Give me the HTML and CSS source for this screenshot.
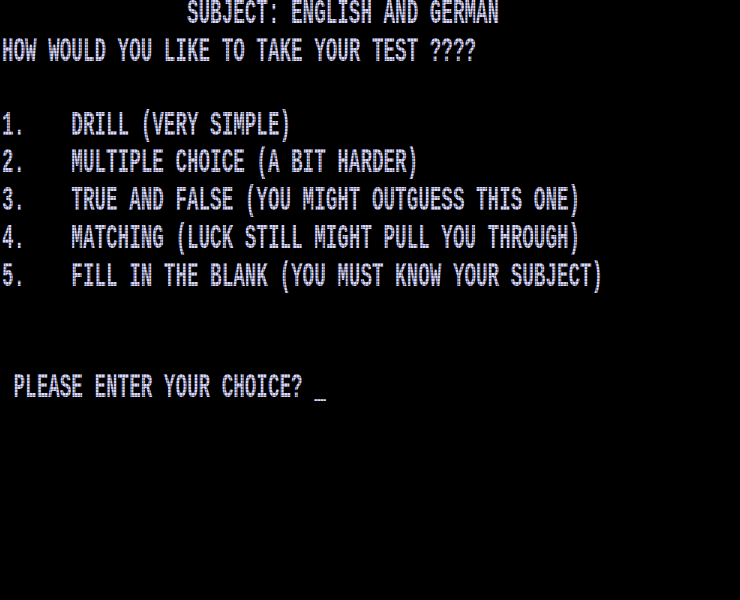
FILE: index.html
```html
<!DOCTYPE html>
<html lang="en">
<head>
    <meta charset="UTF-8">
    <meta name="viewport" content="width=device-width, initial-scale=1.0">
    <title>Test Menu</title>
    <link rel="stylesheet" href="styles.css">
</head>
<body>

<div class="screen">
<pre class="text">                SUBJECT: ENGLISH AND GERMAN
HOW WOULD YOU LIKE TO TAKE YOUR TEST ????

1.    DRILL (VERY SIMPLE)
2.    MULTIPLE CHOICE (A BIT HARDER)
3.    TRUE AND FALSE (YOU MIGHT OUTGUESS THIS ONE)
4.    MATCHING (LUCK STILL MIGHT PULL YOU THROUGH)
5.    FILL IN THE BLANK (YOU MUST KNOW YOUR SUBJECT)


 PLEASE ENTER YOUR CHOICE? _</pre>
</div>

</body>
</html>
```

FILE: styles.css
```css
body {
    margin: 0;
    padding: 0;
    background: #000;
    overflow: hidden;
}

/* 64 x 16 character screen */
.screen {
    position: relative;
    width: 740px;
    height: 600px;
    background: #000;
    overflow: hidden;
}

.text {
    margin: 0;
    width: 740px;
    font-family: "Liberation Mono", monospace;
    font-weight: bold;
    font-size: 19.27px;
    line-height: 20.833px;
    color: #d6d6fa;
    white-space: pre;
    transform: translate(2px, -4px) scaleY(1.8);
    transform-origin: 0 0;
}

/* phosphor dot texture */
.screen::after {
    content: "";
    position: absolute;
    inset: 0;
    background:
        repeating-linear-gradient(to bottom, transparent 0, transparent 2px, rgba(0, 0, 0, 0.35) 2px, rgba(0, 0, 0, 0.35) 3px),
        repeating-linear-gradient(to right, transparent 0, transparent 2px, rgba(0, 0, 0, 0.25) 2px, rgba(0, 0, 0, 0.25) 3px);
    pointer-events: none;
}
```
